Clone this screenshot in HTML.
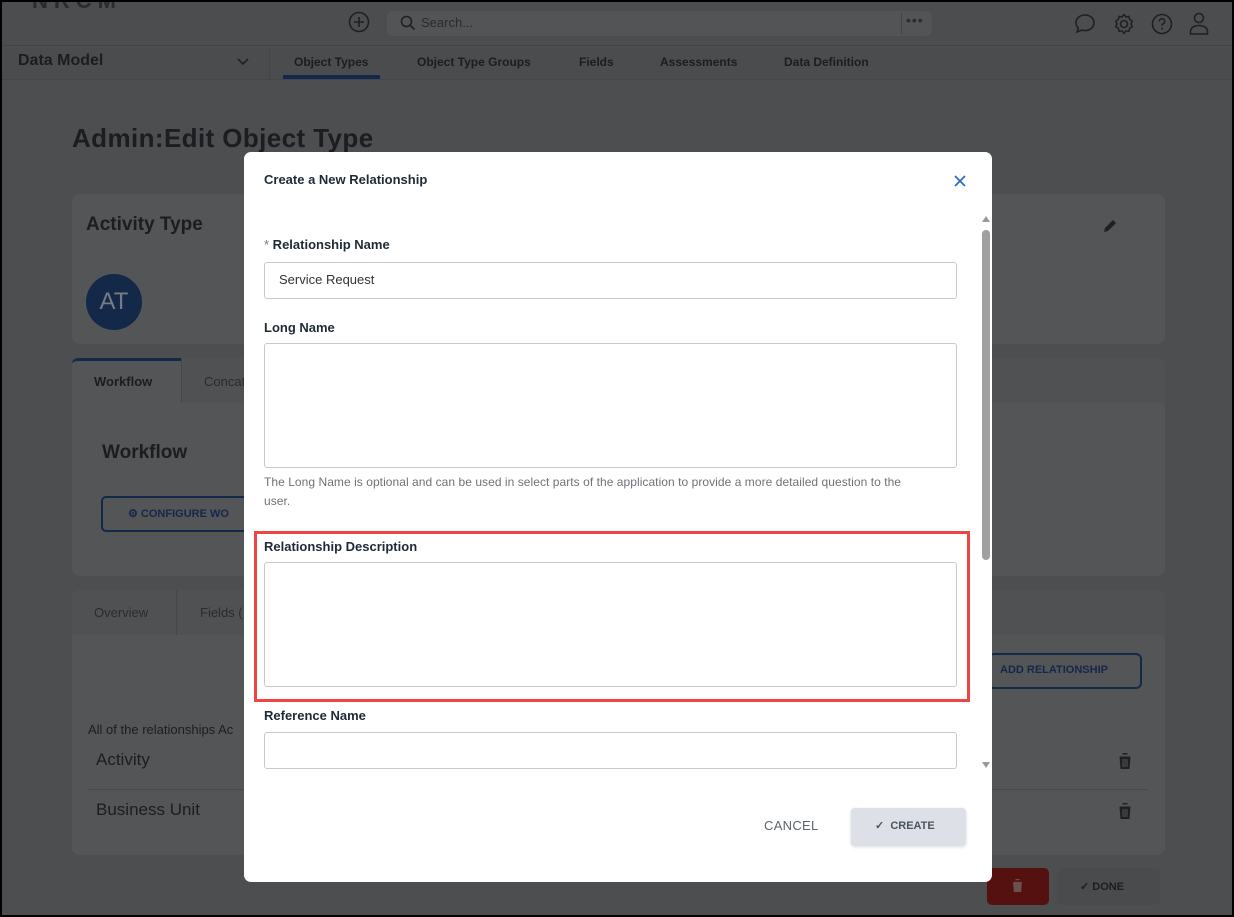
<!DOCTYPE html>
<html><head><meta charset="utf-8"><style>
*{box-sizing:border-box;margin:0;padding:0}
body{width:1234px;height:917px;overflow:hidden;font-family:"Liberation Sans",sans-serif;background:#000;position:relative}
.frame{position:absolute;left:2px;top:2px;width:1230px;height:913px;background:#4d4e50;overflow:hidden}
.abs{position:absolute}
.t{color:#1b1d20}
.card{position:absolute;background:#545557;border-radius:8px}
.modal{position:absolute;left:242px;top:150px;width:748px;height:730px;background:#fff;border-radius:7px}
.lbl{position:absolute;left:20px;font-size:13px;font-weight:bold;color:#1f2a36}
.inp{position:absolute;left:20px;width:693px;border:1px solid #c9c9c9;border-radius:3px;background:#fff}
</style></head><body>
<div class="frame">
  <div class="abs" style="left:0;top:0;width:1230px;height:44px;background:#4c4d4f;border-bottom:1px solid #424344"></div>
  <div class="abs" style="left:30px;top:-14px;font-size:22px;font-weight:bold;color:#2a2b2d;letter-spacing:6px">NRCM</div>
  <svg class="abs" style="left:346px;top:9px" width="22" height="22" viewBox="0 0 22 22"><circle cx="11" cy="11" r="9.5" fill="none" stroke="#1f2022" stroke-width="1.6"/><path d="M11 6v10M6 11h10" stroke="#1f2022" stroke-width="1.6"/></svg>
  <div class="abs" style="left:385px;top:9px;width:545px;height:25px;background:#535456;border-radius:6px"></div>
  <svg class="abs" style="left:398px;top:13px" width="16" height="16" viewBox="0 0 16 16"><circle cx="6.5" cy="6.5" r="5" fill="none" stroke="#1f2022" stroke-width="1.6"/><path d="M10 10l4.5 4.5" stroke="#1f2022" stroke-width="1.8"/></svg>
  <div class="abs" style="left:419px;top:13px;font-size:13px;color:#2a2b2d">Search...</div>
  <div class="abs" style="left:899px;top:11px;width:1px;height:21px;background:#444"></div>
  <div class="abs" style="left:904px;top:10px;font-size:14px;color:#2a2b2d;letter-spacing:1px">•••</div>
  <svg class="abs" style="left:1071px;top:10px" width="24" height="24" viewBox="0 0 24 24"><path d="M12 3c5 0 9 3.4 9 7.8s-4 7.8-9 7.8c-1.2 0-2.3-.2-3.3-.5L4 20l1.3-3.8C3.9 14.8 3 13 3 10.8 3 6.4 7 3 12 3z" fill="none" stroke="#1f2022" stroke-width="1.6"/></svg>
  <svg class="abs" style="left:1110px;top:10px" width="24" height="24" viewBox="0 0 24 24"><circle cx="12" cy="12" r="3.5" fill="none" stroke="#1f2022" stroke-width="1.6"/><path d="M12 2.5l2 2.5 3-.6.6 3 2.6 1.6-1.2 2.9 1.2 2.9-2.6 1.6-.6 3-3-.6-2 2.5-2-2.5-3 .6-.6-3L3.8 14.8 5 11.9 3.8 9l2.6-1.6.6-3 3 .6z" fill="none" stroke="#1f2022" stroke-width="1.5"/></svg>
  <svg class="abs" style="left:1148px;top:10px" width="24" height="24" viewBox="0 0 24 24"><circle cx="12" cy="12" r="9.5" fill="none" stroke="#1f2022" stroke-width="1.6"/><path d="M9.3 9.5a2.7 2.7 0 1 1 3.8 2.4c-.8.4-1.1.9-1.1 1.8" fill="none" stroke="#1f2022" stroke-width="1.6"/><circle cx="12" cy="16.6" r="1" fill="#1f2022"/></svg>
  <svg class="abs" style="left:1185px;top:9px" width="24" height="26" viewBox="0 0 24 26"><circle cx="12" cy="7" r="4.5" fill="none" stroke="#1f2022" stroke-width="1.6"/><path d="M3.5 23v-2.5c0-3.5 3.5-6 8.5-6s8.5 2.5 8.5 6V23z" fill="none" stroke="#1f2022" stroke-width="1.6"/></svg>
  <div class="abs" style="left:0;top:45px;width:1230px;height:33px;background:#4b4c4e;border-bottom:1px solid #454647"></div>
  <div class="abs t" style="left:16px;top:50px;font-size:16px;font-weight:bold">Data Model</div>
  <svg class="abs" style="left:234px;top:55px" width="14" height="10" viewBox="0 0 14 10"><path d="M2 2l5 5 5-5" fill="none" stroke="#1f2022" stroke-width="1.6"/></svg>
  <div class="abs" style="left:267px;top:46px;width:1px;height:30px;background:#444"></div>
  <div class="abs t" style="left:292px;top:53px;font-size:12px;font-weight:bold">Object Types</div>
  <div class="abs" style="left:281px;top:73px;width:97px;height:4px;background:#14284a"></div>
  <div class="abs t" style="left:415px;top:53px;font-size:12px;font-weight:bold">Object Type Groups</div>
  <div class="abs t" style="left:577px;top:53px;font-size:12px;font-weight:bold">Fields</div>
  <div class="abs t" style="left:658px;top:53px;font-size:12px;font-weight:bold">Assessments</div>
  <div class="abs t" style="left:782px;top:53px;font-size:12px;font-weight:bold">Data Definition</div>
  <div class="abs t" style="left:70px;top:121px;font-size:26px;font-weight:bold;letter-spacing:.4px">Admin:Edit Object Type</div>
  <div class="card" style="left:70px;top:192px;width:1093px;height:150px"></div>
  <div class="abs t" style="left:84px;top:212px;font-size:19px;font-weight:bold">Activity Type</div>
  <div class="abs" style="left:84px;top:272px;width:56px;height:56px;border-radius:50%;background:#14284a;color:#777c84;font-size:24px;line-height:56px;text-align:center">AT</div>
  <svg class="abs" style="left:1100px;top:216px" width="16" height="16" viewBox="0 0 16 16"><path d="M2 14l1-4 8-8 3 3-8 8z" fill="#1f2022"/></svg>
  <div class="card" style="left:70px;top:356px;width:1093px;height:218px"></div>
  <div class="abs" style="left:70px;top:356px;width:1093px;height:45px;background:#505153;border-radius:8px 8px 0 0"></div>
  <div class="abs" style="left:70px;top:356px;width:109px;height:46px;background:#545557;border-top:3px solid #14284a;border-radius:6px 0 0 0"></div>
  <div class="abs t" style="left:92px;top:372px;font-size:13px;font-weight:bold">Workflow</div>
  <div class="abs" style="left:179px;top:356px;width:1px;height:45px;background:#464748"></div>
  <div class="abs" style="left:202px;top:372px;font-size:13px;color:#2a2b2d">Concat</div>
  <div class="abs t" style="left:100px;top:440px;font-size:19px;font-weight:bold">Workflow</div>
  <div class="abs" style="left:99px;top:494px;width:160px;height:36px;border:2px solid #14284a;border-radius:5px"></div>
  <div class="abs" style="left:126px;top:505px;font-size:11px;font-weight:bold;color:#14284a">⚙ CONFIGURE WO</div>
  <div class="card" style="left:70px;top:588px;width:1093px;height:265px"></div>
  <div class="abs" style="left:70px;top:588px;width:1093px;height:45px;background:#505153;border-radius:8px 8px 0 0"></div>
  <div class="abs" style="left:92px;top:603px;font-size:13px;color:#2a2b2d">Overview</div>
  <div class="abs" style="left:174px;top:588px;width:1px;height:45px;background:#464748"></div>
  <div class="abs" style="left:198px;top:603px;font-size:13px;color:#2a2b2d">Fields (</div>
  <div class="abs" style="left:986px;top:651px;width:154px;height:36px;border:2px solid #14284a;border-radius:6px"></div>
  <div class="abs" style="left:998px;top:662px;font-size:11px;font-weight:bold;color:#14284a">ADD RELATIONSHIP</div>
  <div class="abs t" style="left:86px;top:720px;font-size:13px">All of the relationships Ac</div>
  <div class="abs t" style="left:94px;top:748px;font-size:17px">Activity</div>
  <div class="abs" style="left:86px;top:787px;width:1060px;height:1px;background:#484949"></div>
  <div class="abs t" style="left:94px;top:798px;font-size:17px">Business Unit</div>
  <svg class="abs" style="left:1115px;top:750px" width="16" height="18" viewBox="0 0 16 18"><path d="M1 2.5h14M5.5 2.5V1h5v1.5M2.5 4.5h11L12.5 17h-9z" fill="#1f2022"/><path d="M6 7v8M8 7v8M10 7v8" stroke="#545557" stroke-width="1"/></svg>
  <svg class="abs" style="left:1115px;top:800px" width="16" height="18" viewBox="0 0 16 18"><path d="M1 2.5h14M5.5 2.5V1h5v1.5M2.5 4.5h11L12.5 17h-9z" fill="#1f2022"/><path d="M6 7v8M8 7v8M10 7v8" stroke="#545557" stroke-width="1"/></svg>
  <div class="abs" style="left:985px;top:866px;width:62px;height:37px;background:#551010;border-radius:5px"></div>
  <svg class="abs" style="left:1009px;top:876px" width="13" height="15" viewBox="0 0 16 18"><path d="M1 2.5h14M5.5 2.5V1h5v1.5M2.5 4.5h11L12.5 17h-9z" fill="#6b5050"/></svg>
  <div class="abs" style="left:1055px;top:866px;width:103px;height:37px;background:#4a4b4d;border-radius:5px"></div>
  <div class="abs t" style="left:1078px;top:878px;font-size:11px;font-weight:bold">✓ DONE</div>

  <div class="modal">
    <div class="abs" style="left:20px;top:20px;font-size:13px;font-weight:bold;color:#1f2a36">Create a New Relationship</div>
    <svg class="abs" style="left:709px;top:22px" width="14" height="14" viewBox="0 0 14 14"><path d="M2 2l10 10M12 2L2 12" stroke="#2d6bc8" stroke-width="1.8"/></svg>
    <div class="lbl" style="top:85px"><span style="color:#777;font-weight:normal">*</span> Relationship Name</div>
    <div class="inp" style="top:110px;height:37px"></div>
    <div class="abs" style="left:35px;top:120px;font-size:13px;color:#333">Service Request</div>
    <div class="lbl" style="top:168px">Long Name</div>
    <div class="inp" style="top:191px;height:125px"></div>
    <div class="abs" style="left:20px;top:321px;width:700px;font-size:12px;line-height:19px;color:#6f7377;letter-spacing:.05px">The Long Name is optional and can be used in select parts of the application to provide a more detailed question to the<br>user.</div>
    <div class="abs" style="left:10px;top:379px;width:716px;height:171px;border:3px solid #ef4444"></div>
    <div class="lbl" style="top:387px">Relationship Description</div>
    <div class="inp" style="top:410px;height:125px"></div>
    <div class="lbl" style="top:556px">Reference Name</div>
    <div class="inp" style="top:580px;height:37px"></div>
    <div class="abs" style="left:738px;top:64px;width:0;height:0;border-left:4px solid transparent;border-right:4px solid transparent;border-bottom:6px solid #999"></div>
    <div class="abs" style="left:738px;top:78px;width:8px;height:330px;background:#a0a0a0;border-radius:4px"></div>
    <div class="abs" style="left:738px;top:610px;width:0;height:0;border-left:4px solid transparent;border-right:4px solid transparent;border-top:6px solid #999"></div>
    <div class="abs" style="left:520px;top:666px;font-size:13px;color:#5c6670;letter-spacing:.3px">CANCEL</div>
    <div class="abs" style="left:607px;top:656px;width:115px;height:38px;background:#dde0e6;border-radius:4px;box-shadow:0 1px 3px rgba(0,0,0,.15)"></div>
    <div class="abs" style="left:631px;top:667px;font-size:11px;font-weight:bold;color:#4a5560">✓&nbsp; CREATE</div>
  </div>
</div>
</body></html>
